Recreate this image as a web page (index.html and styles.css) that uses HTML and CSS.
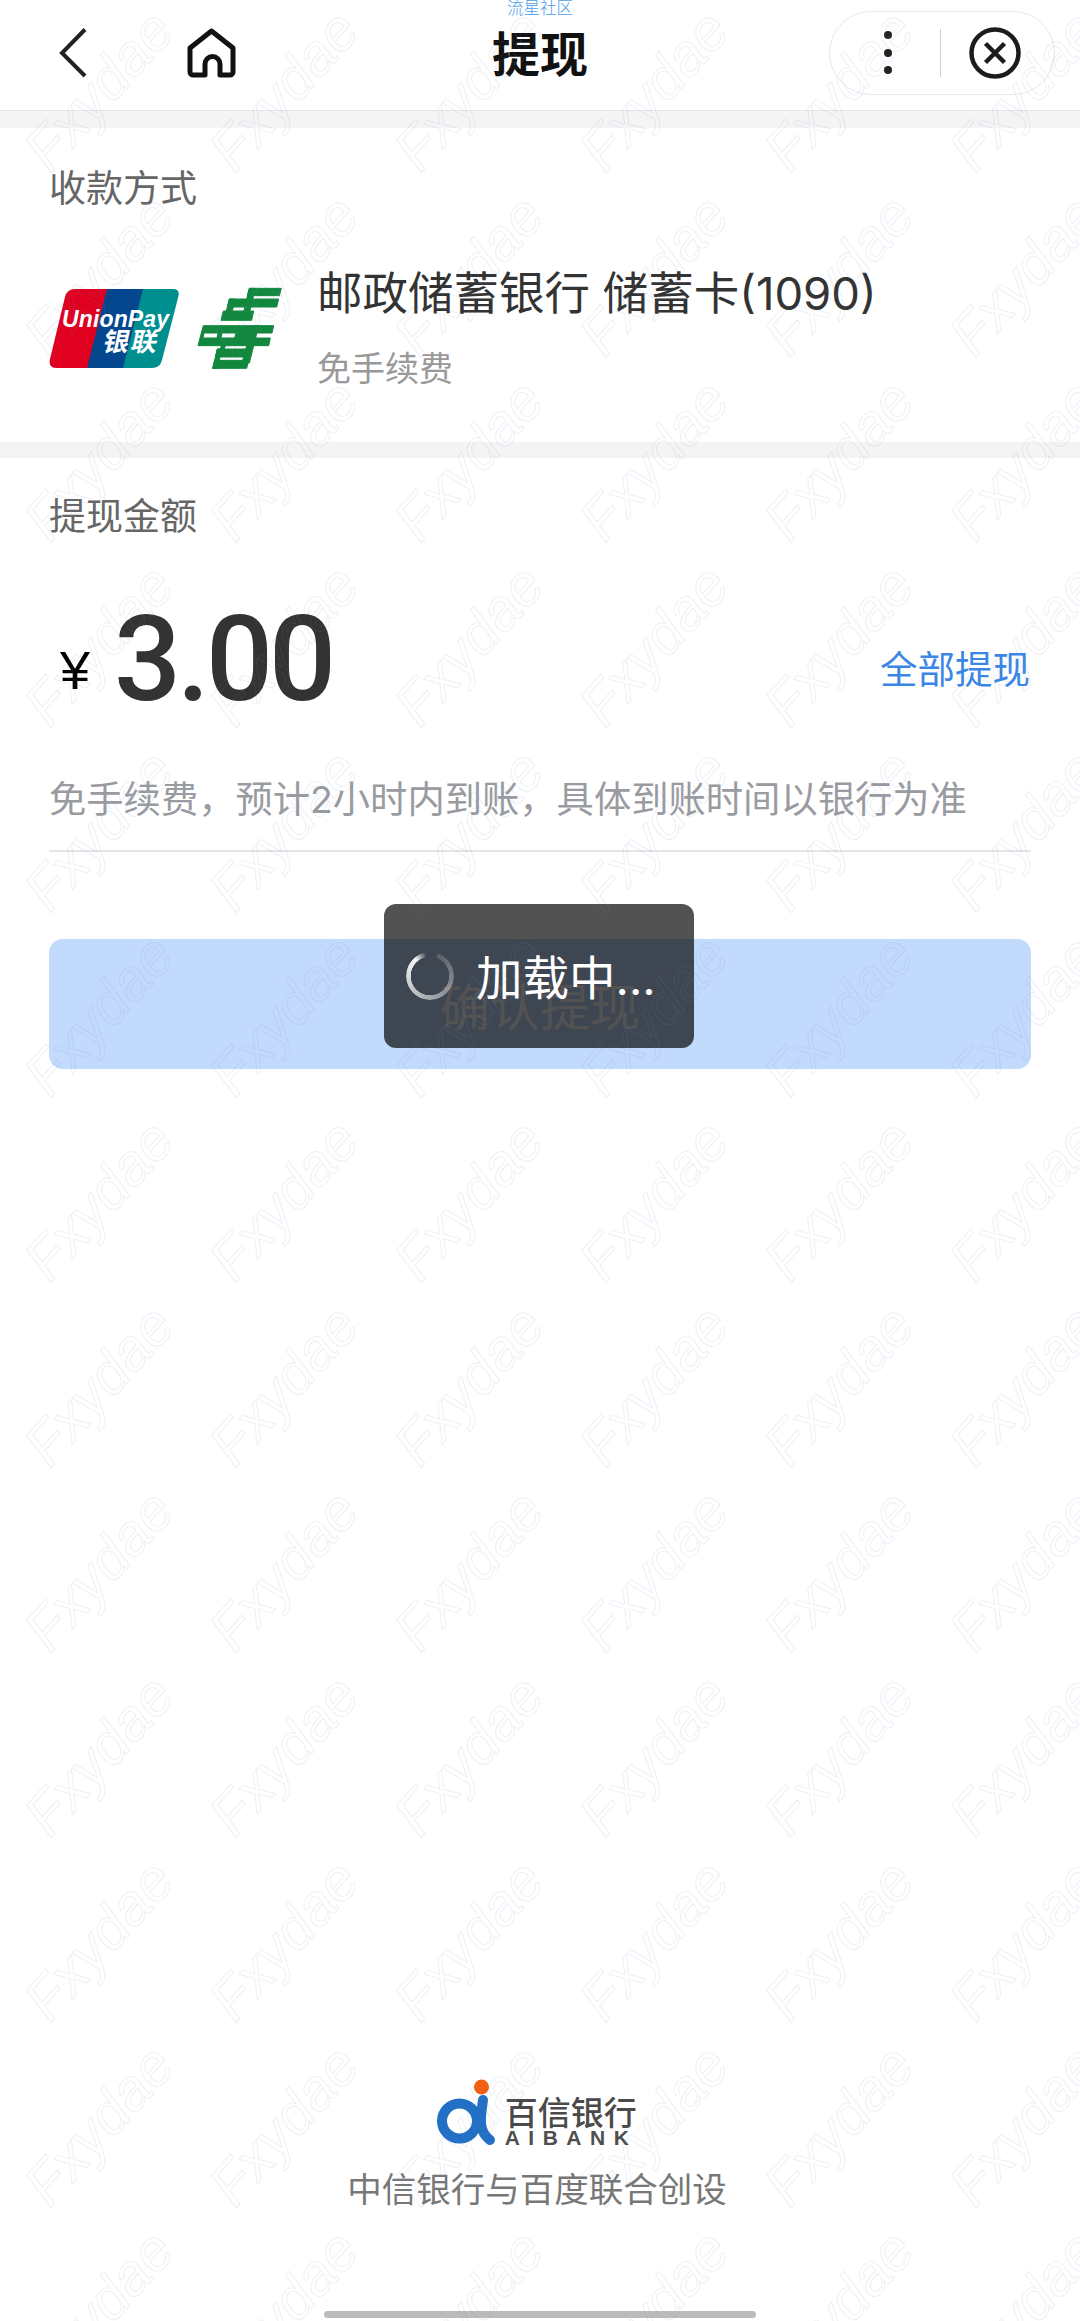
FILE: index.html
```html
<!DOCTYPE html>
<html lang="zh-CN">
<head>
<meta charset="utf-8">
<title>提现</title>
<link rel="stylesheet" href="styles.css">
</head>
<body>
<div class="page">
  <header class="nav">
    <span class="brand">流星社区</span>
    <div class="nav-left">
      <svg class="ic-back" viewBox="58 26 32 54"><path d="M85 29.5 62 53l23 23"/></svg>
      <svg class="ic-home" viewBox="186 26 52 54"><path d="M205 75h-12a3 3 0 0 1-3-3V48l21.500-17L233 48v24a3 3 0 0 1-3 3h-10V64a7.500 7.500 0 0 0-15 0z"/></svg>
    </div>
    <h1 class="nav-title">提现</h1>
    <div class="nav-right">
      <div class="capsule">
        <svg class="ic-dots" viewBox="0 0 16 48"><circle cx="8" cy="6" r="4"/><circle cx="8" cy="24" r="4"/><circle cx="8" cy="41" r="4"/></svg>
        <span class="capsule-line"></span>
        <svg class="ic-close" viewBox="0 0 54 54"><circle cx="27" cy="27" r="23.500"/><path d="M17.500 17.500l19 19M36.500 17.500l-19 19"/></svg>
      </div>
    </div>
  </header>

  <div class="band band-top"></div>

  <section class="method">
    <div class="label">收款方式</div>
    <div class="method-row">
      <svg class="logo-up" viewBox="0 0 130 79">
        <path class="up-teal" d="M88 0h36q7 0 5.500 7L113 71q-2 8-10 8H66z"/>
        <path class="up-blue" d="M50 0h44L74 79H32z"/>
        <path class="up-red" d="M26 0h32L38 79H8q-9 0-7-9L16 8q2-8 10-8z"/>
        <text class="up-en" x="13" y="38" textLength="107">UnionPay</text>
        <text class="up-cn" x="66" y="62" transform="skewX(-12)" textLength="54">银联</text>
      </svg>
      <svg class="logo-post" viewBox="0 0 282 270">
        <path class="post-g" d="M172 16H268L262 38H166Z"/>
        <path class="post-g" d="M172 16H190L172 90H154Z"/>
        <path class="post-g" d="M112 48H260L254 72H106Z"/>
        <path class="post-g" d="M112 48H130L118 96H100Z"/>
        <path class="post-g" d="M94 84H185L179 112H87Z"/>
        <path class="post-g" d="M34 128H245L240 150H28Z"/>
        <path class="post-g" d="M24 165H235L230 188H18Z"/>
        <path class="post-g" d="M28 150H36L33 165H24Z"/>
        <path class="post-g" d="M78 150H90L87 165H75Z"/>
        <path class="post-g" d="M132 150H180L176 165H128Z"/>
        <path class="post-g" d="M180 128H200L172 240H150Z"/>
        <path class="post-g" d="M88 188H100L97 198H85Z"/>
        <path class="post-g" d="M76 198H170L164 222H70Z"/>
        <path class="post-g" d="M76 198H90L76 256H62Z"/>
        <path class="post-g" d="M68 232H170L164 256H62Z"/>
      </svg>
      <div class="method-text">
        <div class="bank">邮政储蓄银行 储蓄卡(1090)</div>
        <div class="fee">免手续费</div>
      </div>
    </div>
  </section>

  <div class="band"></div>

  <main class="withdraw">
    <div class="label label-amount">提现金额</div>
    <div class="amount-row">
      <span class="yen">¥</span>
      <span class="amount">3.00</span>
      <span class="all">全部提现</span>
    </div>
    <div class="hint">免手续费，预计2小时内到账，具体到账时间以银行为准</div>
    <button class="confirm" type="button">确认提现</button>
  </main>

  <footer class="footer">
    <div class="ai-logo">
      <svg class="ai-mark" viewBox="0 0 74 72">
        <circle class="ai-ring" cx="26.500" cy="45" r="17.500"/>
        <path class="ai-ring" d="M50 24c-2 16-6 30 7 40"/>
        <circle class="ai-dot" cx="48.500" cy="11" r="7.500"/>
      </svg>
      <div class="ai-words">
        <div class="ai-cn">百信银行</div>
        <div class="ai-en">AIBANK</div>
      </div>
    </div>
    <div class="ai-note">中信银行与百度联合创设</div>
    <div class="home-bar"></div>
  </footer>

  <div class="toast">
    <span class="spinner"></span>
    <span class="toast-text">加载中...</span>
  </div>

  <svg class="watermark" width="1080" height="2321">
    <defs>
      <pattern id="wm" width="185" height="185" patternUnits="userSpaceOnUse">
        <text class="wm-text" x="0" y="0" transform="translate(50 174) rotate(-48)">Fxydae</text>
      </pattern>
    </defs>
    <rect width="1080" height="2321" fill="url(#wm)"/>
  </svg>
</div>
</body>
</html>
```

FILE: styles.css
```css
* { box-sizing: border-box; }
html, body { margin: 0; padding: 0; background: #fff; }
body { font-family: "Inter", "Noto Sans CJK SC", sans-serif; color: #333; }

.page {
  position: relative;
  width: 1080px;
  height: 2321px;
  overflow: hidden;
  display: flex;
  flex-direction: column;
  background: #fff;
}

/* nav */
.nav {
  position: relative;
  height: 111px;
  flex: none;
  padding-bottom: 5px;
  border-bottom: 1px solid #e6e6e8;
  display: grid;
  grid-template-columns: 1fr auto 1fr;
  align-items: center;
}
.brand {
  position: absolute;
  left: 0;
  right: 0;
  top: 0;
  text-align: center;
  font-size: 16.500px;
  line-height: 16px;
  color: #4b9eea;
  font-weight: 300;
}
.nav-left { display: flex; align-items: center; padding-left: 58px; gap: 96px; }
.ic-back { width: 32px; height: 54px; fill: none; stroke: #222; stroke-width: 4; }
.ic-home { width: 52px; height: 54px; fill: none; stroke: #111; stroke-width: 5; stroke-linejoin: round; }
.nav-title { margin: 4px 0 0; font-size: 48px; line-height: 60px; font-weight: 700; color: #111; }
.nav-right { display: flex; justify-content: flex-end; padding-right: 25px; }
.capsule {
  width: 226px;
  height: 84px;
  border: 1px solid #e8e8ec;
  border-radius: 42px;
  padding-left: 50px;
  display: flex;
  align-items: center;
}
.ic-dots { width: 16px; height: 48px; fill: #222; }
.capsule-line { width: 1px; height: 48px; margin-left: 44px; margin-right: 27px; background: #cfcfcf; }
.ic-close { width: 54px; height: 54px; fill: none; stroke: #1c1c1c; stroke-width: 4.500; }

.band { height: 16px; flex: none; background: #f4f4f5; }
.band-top { height: 17px; }

/* sections */
.label { font-size: 37px; line-height: 40px; color: #666; padding-left: 49px; }
.method { height: 314px; flex: none; padding-top: 41px; }
.method-row { display: flex; align-items: center; margin-top: 57px; padding-left: 49px; height: 124px; }
.logo-up { width: 130px; height: 79px; flex: none; }
.up-red { fill: #e0001f; }
.up-blue { fill: #04478f; }
.up-teal { fill: #008f8f; }
.up-en { font-family: "Liberation Sans", sans-serif; font-style: italic; font-weight: 700; font-size: 23px; fill: #fff; }
.up-cn { font-family: "Noto Sans CJK SC", sans-serif; font-weight: 700; font-size: 26px; fill: #fff; }
.logo-post { width: 94px; height: 90px; flex: none; margin-left: 13px; }
.post-g { fill: #12883e; stroke: #12883e; stroke-width: 3; }
.method-text { margin-left: 31px; }
.bank { font-size: 45.500px; line-height: 56px; color: #333; }
.fee { margin-top: 25px; font-size: 34px; line-height: 44px; color: #999; }

.withdraw { flex: none; padding-top: 39px; }
.amount-row { display: flex; align-items: center; height: 100px; margin-top: 83px; padding: 0 50px 0 60px; }
.yen { font-family: "Liberation Sans", sans-serif; font-size: 54px; line-height: 60px; color: #000; }
.amount { font-family: "Roboto", sans-serif; margin-left: 24px; margin-bottom: 20px; font-size: 118px; line-height: 100px; font-weight: 500; letter-spacing: -4px; color: #333; }
.all { margin-left: auto; font-size: 37.500px; line-height: 50px; color: #3a86e6; }
.hint {
  margin: 55px 49px 0;
  height: 77px;
  font-size: 37.300px;
  line-height: 50px;
  color: #999ba0;
  border-bottom: 2px solid #e5e5e7;
}
.confirm {
  display: block;
  width: 982px;
  height: 130px;
  margin: 87px 49px 0;
  border: 0;
  border-radius: 14px;
  background: #c2dafc;
  color: #fff;
  font-family: inherit;
  font-size: 50px;
}

/* footer */
.footer { margin-top: auto; display: flex; flex-direction: column; align-items: center; padding-bottom: 3px; }
.ai-logo { display: flex; align-items: flex-end; margin-right: 10px; }
.ai-mark { width: 74px; height: 72px; flex: none; }
.ai-ring { fill: none; stroke: #2170c6; stroke-width: 10; stroke-linecap: round; }
.ai-dot { fill: #f1600f; }
.ai-words { margin-left: -2px; }
.ai-cn { font-size: 33px; line-height: 34px; font-weight: 500; color: #4a4a4a; }
.ai-en { font-family: "Liberation Sans", sans-serif; margin-top: -2px; font-size: 21px; line-height: 20px; font-weight: 700; letter-spacing: 8.500px; color: #4f4f4f; }
.ai-note { margin-top: 17px; margin-right: 6px; font-size: 34.500px; line-height: 50px; color: #777; }
.home-bar { width: 432px; height: 7px; margin-top: 96px; border-radius: 4px; background: #bbb; }

/* overlays */
.toast {
  position: absolute;
  left: 384px;
  top: 904px;
  width: 310px;
  height: 144px;
  padding-left: 22px;
  border-radius: 12px;
  background: rgba(0, 0, 0, .68);
  display: flex;
  align-items: center;
  gap: 22px;
}
.spinner {
  width: 48px;
  height: 48px;
  border-radius: 50%;
  background: conic-gradient(from 20deg, rgba(255,255,255,.15) 0deg, rgba(255,255,255,.45) 130deg, rgba(255,255,255,.95) 300deg, rgba(255,255,255,0) 330deg);
  -webkit-mask: radial-gradient(circle, transparent 19px, #000 19.500px);
  mask: radial-gradient(circle, transparent 19px, #000 19.500px);
}
.toast-text { margin-top: 3px; font-size: 46.500px; line-height: 60px; color: #fff; }

.watermark { position: absolute; left: 0; top: 0; pointer-events: none; }
.wm-text {
  font-family: "Liberation Sans", sans-serif;
  font-style: italic;
  font-size: 58px;
  fill: none;
  stroke: rgba(110, 130, 185, .13);
  stroke-width: 1;
}
```
